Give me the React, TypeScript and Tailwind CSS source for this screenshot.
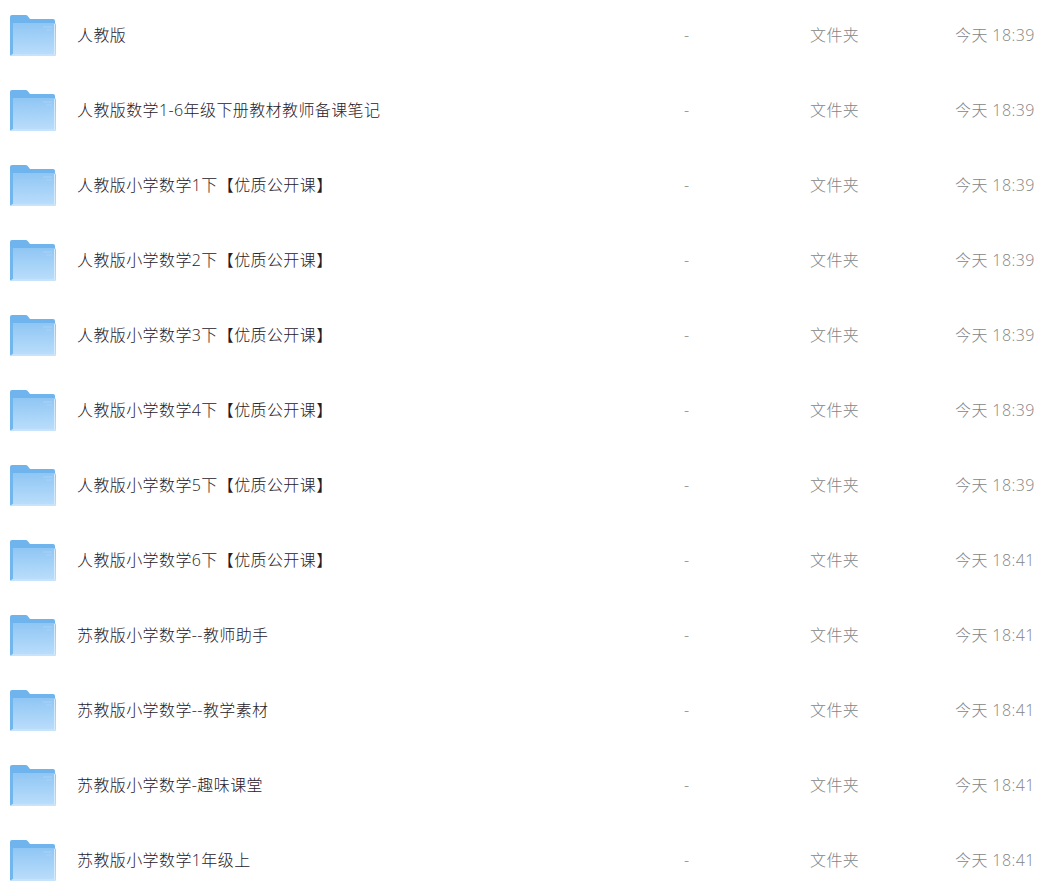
const rows = [
  { name: '人教版', time: '今天 18:39' },
  { name: '人教版数学1-6年级下册教材教师备课笔记', time: '今天 18:39' },
  { name: '人教版小学数学1下【优质公开课】', time: '今天 18:39' },
  { name: '人教版小学数学2下【优质公开课】', time: '今天 18:39' },
  { name: '人教版小学数学3下【优质公开课】', time: '今天 18:39' },
  { name: '人教版小学数学4下【优质公开课】', time: '今天 18:39' },
  { name: '人教版小学数学5下【优质公开课】', time: '今天 18:39' },
  { name: '人教版小学数学6下【优质公开课】', time: '今天 18:41' },
  { name: '苏教版小学数学--教师助手', time: '今天 18:41' },
  { name: '苏教版小学数学--教学素材', time: '今天 18:41' },
  { name: '苏教版小学数学-趣味课堂', time: '今天 18:41' },
  { name: '苏教版小学数学1年级上', time: '今天 18:41' },
]

function FolderIcon() {
  return (
    <svg width="46" height="41" viewBox="0 0 46 41" className="shrink-0">
      <defs>
        <linearGradient id="folderFront" x1="0" y1="0" x2="0" y2="1">
          <stop offset="0%" stopColor="#8fc6f4" />
          <stop offset="100%" stopColor="#bcdefb" />
        </linearGradient>
      </defs>
      <path d="M0 2a2 2 0 0 1 2-2h13.500a3 3 0 0 1 2.400 1.200L20 4h23a2 2 0 0 1 2 2v31H2.500L0 40z" fill="#6fb4ec" />
      <path d="M3 8h41a2 2 0 0 1 2 2v29.500a1.500 1.500 0 0 1-1.500 1.500H1.500A1.500 1.500 0 0 1 0 39.500L3 38z" fill="url(#folderFront)" />
      <path d="M0 6l3 2v31l-3 1.500z" fill="#72b6ee" />
      <path d="M33 12h9M36 15h6" stroke="#a9d2f6" strokeWidth="1" />
      <path d="M44.500 9v31H2" stroke="#d3e9fc" strokeWidth="1" fill="none" />
    </svg>
  )
}

export default function App() {
  return (
    <div className="h-[891px] overflow-hidden bg-white font-['Open_Sans','Noto_Sans_CJK_SC',sans-serif] text-base font-light tracking-[0.4px]">
      <div className="-mt-[2px]">
        {rows.map((r, i) => (
          <div key={i} className="flex h-[75px] items-center">
            <div className="ml-[10px] flex w-[67px] items-center">
              <FolderIcon />
            </div>
            <div className="w-[607px] pb-[2px] text-[#1f2029]">{r.name}</div>
            <div className="w-[126px] pb-[2px] text-[#858585]">-</div>
            <div className="w-[145px] pb-[2px] text-[#858585]">文件夹</div>
            <div className="whitespace-nowrap pb-[2px] text-[#858585]">{r.time}</div>
          </div>
        ))}
      </div>
    </div>
  )
}
